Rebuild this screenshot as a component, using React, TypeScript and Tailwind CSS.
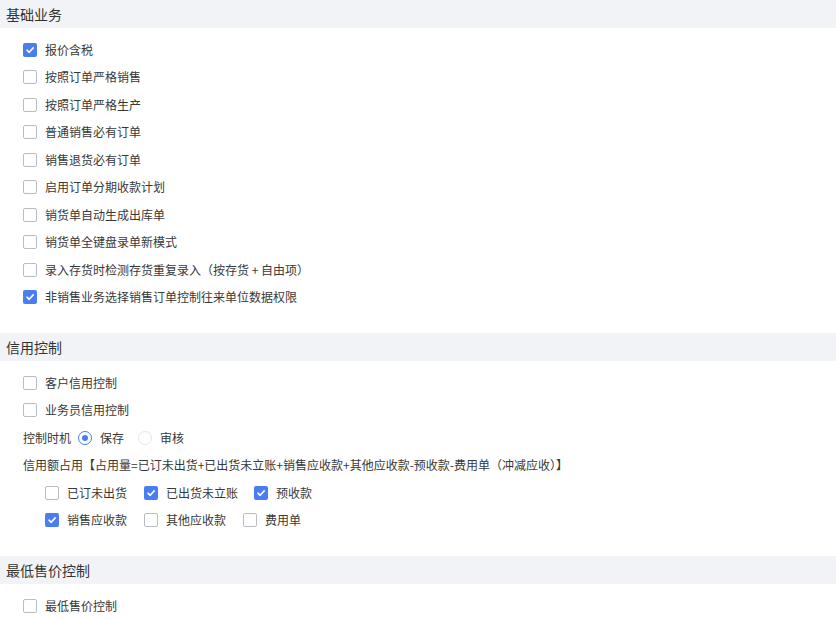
import React from "react";

const font = { fontFamily: '"Noto Sans CJK SC", "Noto Sans", sans-serif' };

function Box({ checked }: { checked?: boolean }) {
  return checked ? (
    <span className="flex h-[14px] w-[14px] shrink-0 items-center justify-center rounded-[2px] bg-[#4a7ef0]">
      <svg width="10" height="10" viewBox="0 0 10 10">
        <path d="M2 5.2 L4.2 7.3 L8.2 2.9" fill="none" stroke="#fff" strokeWidth="1.6" strokeLinecap="round" strokeLinejoin="round" />
      </svg>
    </span>
  ) : (
    <span className="h-[14px] w-[14px] shrink-0 rounded-[2px] border border-[#b8bcc4] bg-white" />
  );
}

function Radio({ checked }: { checked?: boolean }) {
  return checked ? (
    <span className="flex h-[14px] w-[14px] shrink-0 items-center justify-center rounded-full border border-[#4a7ef0] bg-white">
      <span className="h-[6px] w-[6px] rounded-full bg-[#4a7ef0]" />
    </span>
  ) : (
    <span className="h-[14px] w-[14px] shrink-0 rounded-full border border-[#e3e5ea] bg-white" />
  );
}

function Check({ label, checked, className = "" }: { label: string; checked?: boolean; className?: string }) {
  return (
    <div className={"flex items-center gap-2 " + className}>
      <Box checked={checked} />
      <span className="text-[12px] text-[#383838]">{label}</span>
    </div>
  );
}

function Header({ title }: { title: string }) {
  return (
    <div className="flex h-[28px] items-center bg-[#f2f3f7] pl-[6px] text-[14px] text-[#333]">{title}</div>
  );
}

function Row({ children, indent = "pl-[23px]" }: { children: React.ReactNode; indent?: string }) {
  return <div className={"flex h-[27.5px] items-center " + indent}>{children}</div>;
}

export default function App() {
  const basic: [string, boolean][] = [
    ["报价含税", true],
    ["按照订单严格销售", false],
    ["按照订单严格生产", false],
    ["普通销售必有订单", false],
    ["销售退货必有订单", false],
    ["启用订单分期收款计划", false],
    ["销货单自动生成出库单", false],
    ["销货单全键盘录单新模式", false],
    ["录入存货时检测存货重复录入（按存货 + 自由项）", false],
    ["非销售业务选择销售订单控制往来单位数据权限", true],
  ];
  return (
    <div className="h-[620px] w-[836px] overflow-hidden bg-white" style={font}>
      <Header title="基础业务" />
      <div className="pb-[22px] pt-[8px]">
        {basic.map(([l, c]) => (
          <Row key={l}>
            <Check label={l} checked={c} />
          </Row>
        ))}
      </div>
      <Header title="信用控制" />
      <div className="pb-[22px] pt-[8px]">
        <Row>
          <Check label="客户信用控制" />
        </Row>
        <Row>
          <Check label="业务员信用控制" />
        </Row>
        <Row>
          <span className="text-[12px] text-[#383838]">控制时机</span>
          <div className="ml-[7px] flex items-center gap-2">
            <Radio checked />
            <span className="text-[12px] text-[#383838]">保存</span>
          </div>
          <div className="ml-[14px] flex items-center gap-2">
            <Radio />
            <span className="text-[12px] text-[#383838]">审核</span>
          </div>
        </Row>
        <Row>
          <span className="text-[12px] text-[#383838]">
            信用额占用【占用量=已订未出货+已出货未立账+销售应收款+其他应收款-预收款-费用单（冲减应收）】
          </span>
        </Row>
        <Row indent="pl-[45px]">
          <Check label="已订未出货" className="mr-[17px]" />
          <Check label="已出货未立账" checked className="mr-[16px]" />
          <Check label="预收款" checked />
        </Row>
        <Row indent="pl-[45px]">
          <Check label="销售应收款" checked className="mr-[17px]" />
          <Check label="其他应收款" className="mr-[17px]" />
          <Check label="费用单" />
        </Row>
      </div>
      <Header title="最低售价控制" />
      <div className="pt-[8px]">
        <Row>
          <Check label="最低售价控制" />
        </Row>
      </div>
    </div>
  );
}
